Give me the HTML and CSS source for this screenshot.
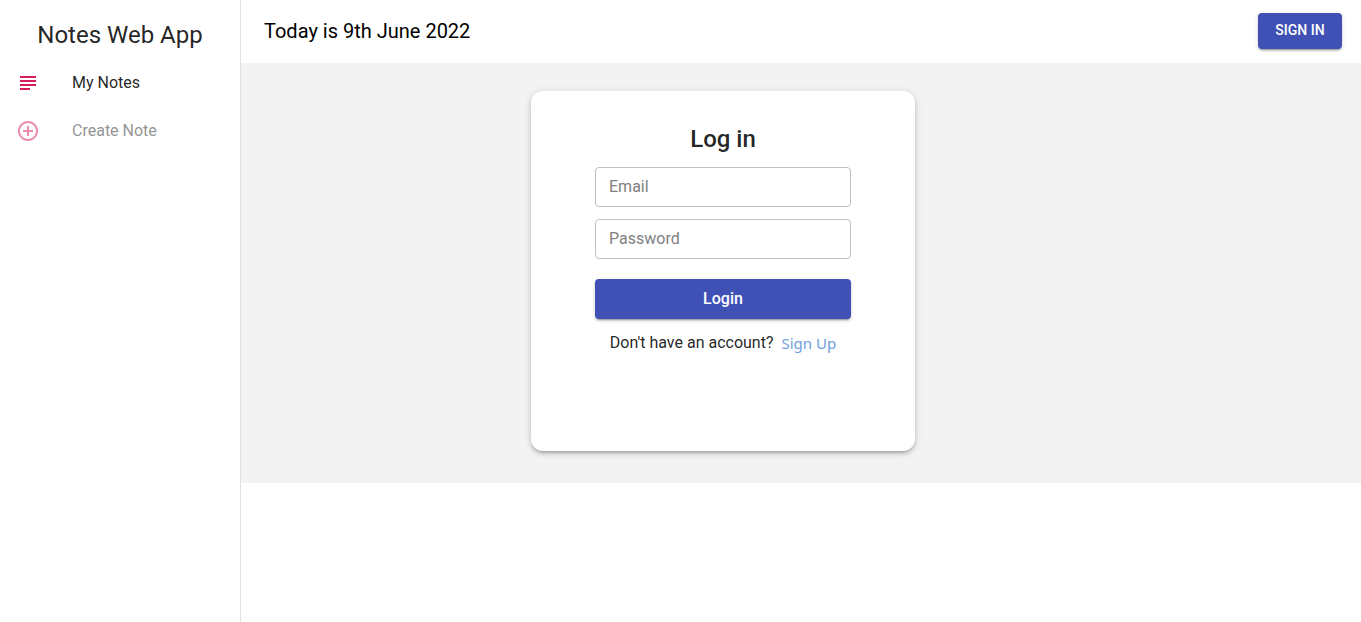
FILE: index.html
```html
<!DOCTYPE html>
<html lang="en">
<head>
<meta charset="utf-8">
<title>Notes Web App</title>
<link rel="stylesheet" href="styles.css">
</head>
<body>
<div class="app">
  <aside class="sidebar">
    <h1 class="brand">Notes Web App</h1>
    <nav class="nav">
      <a class="nav-item" href="#notes">
        <svg class="nav-icon" viewBox="0 0 24 24" aria-hidden="true"><path d="M14 17H4v2h10v-2zm6-8H4v2h16V9zM4 15h16v-2H4v2zM4 5v2h16V5H4z"/></svg>
        <span>My Notes</span>
      </a>
      <a class="nav-item nav-item-disabled" href="#create" aria-disabled="true">
        <svg class="nav-icon" viewBox="0 0 24 24" aria-hidden="true"><path d="M13 7h-2v4H7v2h4v4h2v-4h4v-2h-4V7zm-1-5C6.48 2 2 6.48 2 12s4.48 10 10 10 10-4.48 10-10S17.52 2 12 2zm0 18c-4.41 0-8-3.59-8-8s3.590-8 8-8 8 3.590 8 8-3.590 8-8 8z"/></svg>
        <span>Create Note</span>
      </a>
    </nav>
  </aside>
  <div class="content">
    <header class="topbar">
      <p class="date">Today is 9th June 2022</p>
      <button class="button sign-in" type="button">SIGN IN</button>
    </header>
    <main class="panel">
      <div class="container">
        <form class="card">
          <h2 class="card-title">Log in</h2>
          <input class="field" type="email" placeholder="Email" aria-label="Email">
          <input class="field" type="password" placeholder="Password" aria-label="Password">
          <button class="button login" type="button">Login</button>
          <p class="signup">Don't have an account?<a class="signup-link" href="#signup">Sign Up</a></p>
        </form>
      </div>
    </main>
  </div>
</div>
</body>
</html>
```
FILE: styles.css
```css
* {
  box-sizing: border-box;
}

body {
  margin: 0;
  background: #fff;
  color: rgba(0, 0, 0, 0.87);
  font-family: Roboto, "Liberation Sans", sans-serif;
  font-size: 16px;
  line-height: 24px;
}

h1,
h2,
p {
  margin: 0;
}

.app {
  display: flex;
  min-height: 100vh;
}

.sidebar {
  flex: 0 0 241px;
  padding-top: 19px;
  border-right: 1px solid #e0e0e0;
}

.brand {
  font-size: 24px;
  font-weight: 400;
  line-height: 32px;
  text-align: center;
}

.nav {
  padding-top: 8px;
}

.nav-item {
  display: flex;
  align-items: center;
  gap: 32px;
  height: 48px;
  padding: 0 16px;
  color: inherit;
  text-decoration: none;
}

.nav-item-disabled {
  opacity: 0.5;
}

.nav-icon {
  width: 24px;
  height: 24px;
  fill: #d81b60;
}

.content {
  flex: 1;
  min-width: 0;
}

.topbar {
  display: flex;
  align-items: center;
  justify-content: space-between;
  height: 63px;
  padding: 0 19px 2px 23px;
}

.date {
  color: #000;
  font-size: 20px;
  line-height: 32px;
}

.button {
  padding: 0 16px 2px;
  border: 0;
  border-radius: 4px;
  background: #3f51b5;
  box-shadow: 0 3px 1px -2px rgba(0, 0, 0, 0.2), 0 2px 2px 0 rgba(0, 0, 0, 0.14), 0 1px 5px 0 rgba(0, 0, 0, 0.12);
  color: #fff;
  font-family: inherit;
  font-weight: 500;
  cursor: pointer;
}

.sign-in {
  min-width: 84px;
  height: 36px;
  font-size: 14px;
}

.panel {
  padding: 28px 0 32px;
  background: #f3f3f3;
}

.container {
  max-width: 964px;
}

.card {
  display: flex;
  flex-direction: column;
  width: 384px;
  min-height: 360px;
  margin: 0 auto;
  padding: 32px 64px;
  border-radius: 12px;
  background: #fff;
  box-shadow: 0 3px 3px -2px rgba(0, 0, 0, 0.2), 0 3px 4px 0 rgba(0, 0, 0, 0.14), 0 1px 8px 0 rgba(0, 0, 0, 0.12);
}

.card-title {
  margin-bottom: 12px;
  font-size: 24px;
  font-weight: 500;
  line-height: 32px;
  text-align: center;
}

.field {
  width: 100%;
  height: 40px;
  margin-bottom: 12px;
  padding: 0 13px 2px;
  border: 1px solid #c0c0c0;
  border-radius: 4px;
  background: #fff;
  color: inherit;
  font: inherit;
}

.field::placeholder {
  color: #808080;
  opacity: 1;
}

.login {
  height: 40px;
  margin-top: 8px;
  font-size: 16px;
}

.signup {
  display: flex;
  justify-content: center;
  gap: 8px;
  margin-top: 12px;
  white-space: nowrap;
}

.signup-link {
  color: #6ea0dc;
  font-family: "Noto Sans", "Open Sans", sans-serif;
  font-size: 15px;
  text-decoration: none;
}
```
